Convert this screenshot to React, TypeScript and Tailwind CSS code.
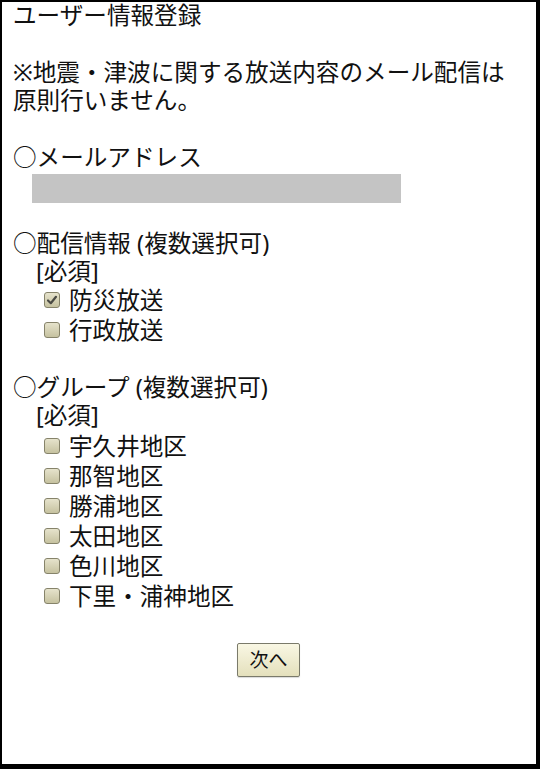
import { Fragment } from 'react'

const font = { fontFamily: '"Noto Sans", "Noto Sans CJK JP", sans-serif' }

const services = [
  { label: '防災放送', checked: true },
  { label: '行政放送', checked: false },
]

const groups = ['宇久井地区', '那智地区', '勝浦地区', '太田地区', '色川地区', '下里・浦神地区']

function Box({ checked }: { checked: boolean }) {
  return (
    <span className="flex h-[16px] w-[16px] shrink-0 items-center justify-center rounded-[3px] border border-[#86836a] bg-gradient-to-b from-[#e6e3cc] to-[#c6c2a0]">
      {checked && (
        <svg viewBox="0 0 12 12" className="h-[12px] w-[12px]">
          <path d="M2 6.5 L4.8 9.2 L10 2.8" fill="none" stroke="#4a4a44" strokeWidth="2.2" strokeLinecap="round" strokeLinejoin="round" />
        </svg>
      )}
    </span>
  )
}

function Row({ label, checked }: { label: string; checked: boolean }) {
  return (
    <div className="flex h-[30px] items-center pl-[31px]">
      <Box checked={checked} />
      <span className="ml-[9px]">{label}</span>
    </div>
  )
}

export default function App() {
  return (
    <div
      style={font}
      className="h-[769px] w-[540px] border-b-[5px] border-l-2 border-r-4 border-t-2 border-black bg-white text-[23.6px] leading-[28px] text-[#111]"
    >
      <div className="flex h-full flex-col pl-[11px] pr-[12px]">
        <div className="leading-[26px]">ユーザー情報登録</div>

        <p className="mt-[30px]">※地震・津波に関する放送内容のメール配信は原則行いません。</p>

        <div className="mt-[29px]">○メールアドレス</div>
        <div className="ml-[19px] mt-[3px] h-[29px] w-[369px] bg-[#c4c4c4]" />

        <div className="mt-[26px]">○配信情報 (複数選択可)</div>
        <div className="pl-[23px]">[必須]</div>
        {services.map((s) => (
          <Row key={s.label} label={s.label} checked={s.checked} />
        ))}

        <div className="mt-[28px]">○グループ (複数選択可)</div>
        <div className="pl-[23px]">[必須]</div>
        <div className="mt-[2px]">
          {groups.map((g) => (
            <Fragment key={g}>
              <Row label={g} checked={false} />
            </Fragment>
          ))}
        </div>

        <div className="mt-[32px] flex justify-center">
          <button className="h-[34px] w-[63px] rounded-[2px] border border-[#7a7a6a] bg-gradient-to-b from-[#f9f7e4] to-[#e4e0bc] text-[19px] leading-none text-[#111] shadow-[0_1px_1px_rgba(0,0,0,0.15)]">
            次へ
          </button>
        </div>
      </div>
    </div>
  )
}
